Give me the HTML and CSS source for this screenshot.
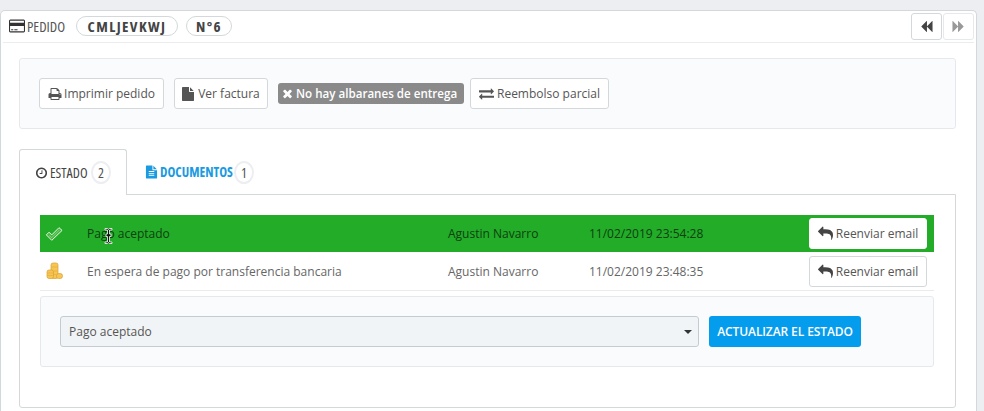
FILE: index.html
```html
<!DOCTYPE html>
<html lang="es">
<head>
<meta charset="utf-8">
<title>Pedido</title>
<link rel="stylesheet" href="styles.css">
</head>
<body>
<svg class="defs" width="0" height="0">
  <symbol id="i-card" viewBox="0 0 1920 1792"><path d="M1760 128q66 0 113 47t47 113v1216q0 66-47 113t-113 47h-1600q-66 0-113-47t-47-113v-1216q0-66 47-113t113-47h1600zm-1600 128q-13 0-22.5 9.5t-9.5 22.5v224h1664v-224q0-13-9.5-22.5t-22.5-9.5h-1600zm1600 1280q13 0 22.5-9.5t9.5-22.5v-608h-1664v608q0 13 9.5 22.5t22.5 9.5h1600zm-1504-128v-128h256v128h-256zm384 0v-128h384v128h-384z"/></symbol>
  <symbol id="i-print" viewBox="0 0 1792 1792"><path d="M448 1536h896v-256h-896v256zm0-640h896v-384h-160q-40 0-68-28t-28-68v-160h-640v640zm1152 64q0-26-19-45t-45-19-45 19-19 45 19 45 45 19 45-19 19-45zm128 0v416q0 13-9.5 22.5t-22.5 9.5h-224v160q0 40-28 68t-68 28h-960q-40 0-68-28t-28-68v-160h-224q-13 0-22.5-9.5t-9.5-22.5v-416q0-79 56.5-135.5t135.5-56.5h64v-544q0-40 28-68t68-28h672q40 0 88 20t76 48l152 152q28 28 48 76t20 88v256h64q79 0 135.5 56.5t56.5 135.5z"/></symbol>
  <symbol id="i-file" viewBox="0 0 1792 1792"><path d="M1024 512v-472q22 14 36 28l408 408q14 14 28 36h-472zm-128 32q0 40 28 68t68 28h544v1056q0 40-28 68t-68 28h-1344q-40 0-68-28t-28-68v-1600q0-40 28-68t68-28h800v544z"/></symbol>
  <symbol id="i-x" viewBox="0 0 1792 1792"><path d="M1490 1322q0 40-28 68l-136 136q-28 28-68 28t-68-28l-294-294-294 294q-28 28-68 28t-68-28l-136-136q-28-28-28-68t28-68l294-294-294-294q-28-28-28-68t28-68l136-136q28-28 68-28t68 28l294 294 294-294q28-28 68-28t68 28l136 136q28 28 28 68t-28 68l-294 294 294 294q28 28 28 68z"/></symbol>
  <symbol id="i-exchange" viewBox="0 0 1792 1792"><path d="M1792 1184v192q0 13-9.5 22.5t-22.5 9.5h-1376v192q0 13-9.5 22.5t-22.5 9.5q-12 0-24-10l-319-320q-9-9-9-22 0-14 9-23l320-320q9-9 23-9 13 0 22.5 9.5t9.5 22.5v192h1376q13 0 22.5 9.5t9.5 22.5zm0-544q0 14-9 23l-320 320q-9 9-23 9-13 0-22.5-9.5t-9.5-22.5v-192h-1376q-13 0-22.5-9.5t-9.5-22.5v-192q0-13 9.5-22.5t22.5-9.5h1376v-192q0-14 9-23t23-9q12 0 24 10l319 319q9 9 9 23z"/></symbol>
  <symbol id="i-clock" viewBox="0 0 1792 1792"><path d="M1024 544v448q0 14-9 23t-23 9h-320q-14 0-23-9t-9-23v-64q0-14 9-23t23-9h224v-352q0-14 9-23t23-9h64q14 0 23 9t9 23zm416 352q0-148-73-273t-198-198-273-73-273 73-198 198-73 273 73 273 198 198 273 73 273-73 198-198 73-273zm224 0q0 209-103 385.5t-279.5 279.5-385.5 103-385.5-103-279.5-279.5-103-385.5 103-385.5 279.5-279.5 385.5-103 385.5 103 279.5 279.5 103 385.5z"/></symbol>
  <symbol id="i-doc" viewBox="0 0 1792 1792"><path d="M1596 476q14 14 28 36h-472v-472q22 14 36 28zm-476 164h544v1056q0 40-28 68t-68 28h-1344q-40 0-68-28t-28-68v-1600q0-40 28-68t68-28h800v544q0 40 28 68t68 28zm160 736v-64q0-14-9-23t-23-9h-704q-14 0-23 9t-9 23v64q0 14 9 23t23 9h704q14 0 23-9t9-23zm0-256v-64q0-14-9-23t-23-9h-704q-14 0-23 9t-9 23v64q0 14 9 23t23 9h704q14 0 23-9t9-23zm0-256v-64q0-14-9-23t-23-9h-704q-14 0-23 9t-9 23v64q0 14 9 23t23 9h704q14 0 23-9t9-23z"/></symbol>
  <symbol id="i-reply" viewBox="0 0 1792 1792"><path d="M1792 1120q0 166-127 451-3 7-10.5 24t-13.5 30-13 22q-12 17-28 17-15 0-23.5-10t-8.5-25q0-9 2.5-26.5t2.5-23.5q5-68 5-123 0-101-17.5-181t-48.5-138.5-80-101-105.5-69.5-133-42.5-154-21.5-175.5-6h-224v256q0 26-19 45t-45 19-45-19l-512-512q-19-19-19-45t19-45l512-512q19-19 45-19t45 19 19 45v256h224q713 0 875 403 53 134 53 333z"/></symbol>
  <symbol id="i-back" viewBox="0 0 1792 1792"><path d="M1683 141q19-19 32-13t13 32v1472q0 26-13 32t-32-13l-710-710q-9-9-13-19v710q0 26-13 32t-32-13l-710-710q-19-19-19-45t19-45l710-710q19-19 32-13t13 32v710q4-10 13-19z"/></symbol>
  <symbol id="i-fwd" viewBox="0 0 1792 1792"><path d="M109 1651q-19 19-32 13t-13-32v-1472q0-26 13-32t32 13l710 710q9 9 13 19v-710q0-26 13-32t32 13l710 710q19 19 19 45t-19 45l-710 710q-19 19-32 13t-13-32v-710q-4 10-13 19z"/></symbol>
</svg>

<main class="panel">
  <header class="panel-head">
    <svg class="icon icon-card"><use href="#i-card"/></svg>
    <span class="head-title">PEDIDO</span>
    <span class="pill pill-ref">CMLJEVKWJ</span>
    <span class="pill pill-num">N°6</span>
    <nav class="pager">
      <a class="pager-btn"><svg class="icon icon-pager"><use href="#i-back"/></svg></a>
      <a class="pager-btn pager-off"><svg class="icon icon-pager"><use href="#i-fwd"/></svg></a>
    </nav>
  </header>

  <section class="well actions">
    <a class="btn btn-print"><svg class="icon"><use href="#i-print"/></svg>Imprimir pedido</a>
    <a class="btn btn-invoice"><svg class="icon"><use href="#i-file"/></svg>Ver factura</a>
    <span class="label"><svg class="icon icon-x"><use href="#i-x"/></svg>No hay albaranes de entrega</span>
    <a class="btn btn-refund"><svg class="icon icon-exchange"><use href="#i-exchange"/></svg>Reembolso parcial</a>
  </section>

  <ul class="tabs">
    <li class="tab tab-active"><svg class="icon icon-tab"><use href="#i-clock"/></svg><span class="tab-name name-estado">ESTADO</span><span class="badge">2</span></li>
    <li class="tab tab-link"><svg class="icon icon-tab"><use href="#i-doc"/></svg><span class="tab-name name-docs">DOCUMENTOS</span><span class="badge">1</span></li>
  </ul>

  <section class="tab-body">
    <div class="status-row status-current">
      <span class="col-icon">
        <svg class="status-icon" viewBox="0 0 20 18"><path d="M1.500 10l3-3 3 3L15.500 2l3.500 3L7.500 16z" fill="#46b83f" stroke="#e8f5e6" stroke-width="1.100" stroke-linejoin="round"/><path d="M4.500 10.500l3 2.500L16 4.500" fill="none" stroke="#9ed69a" stroke-width=".8"/></svg>
      </span>
      <span class="col-name">Pago aceptado</span>
      <span class="col-user">Agustin Navarro</span>
      <span class="col-date">11/02/2019 23:54:28</span>
      <a class="btn btn-resend btn-solid"><svg class="icon icon-reply"><use href="#i-reply"/></svg>Reenviar email</a>
      <svg class="text-cursor" viewBox="0 0 9 17"><path d="M1 1h2.500l1 1 1-1H8v1.500H5.500v4H7V9H5.500v5.500H8V16H5.500l-1-1-1 1H1v-1.500h2.500V9H2V6.500h1.500v-4H1z" fill="#111" stroke="#fff" stroke-width=".8"/></svg>
    </div>
    <div class="status-row status-next">
      <span class="col-icon">
        <svg class="status-icon" viewBox="0 0 18 18"><g fill="#f6c655" stroke="#dc9d2c" stroke-width=".7"><rect x="6" y="1" width="7" height="15.500" rx="2"/><rect x="2" y="8" width="6.500" height="8.500" rx="2"/><rect x="11.500" y="11.500" width="6" height="5" rx="2.200"/></g><path d="M6.500 5h6M8.500 9h4M8.500 12.500h3M2.500 11h5.500M2.500 13.500h5.500" stroke="#e3a93b" stroke-width=".6"/></svg>
      </span>
      <span class="col-name">En espera de pago por transferencia bancaria</span>
      <span class="col-user">Agustin Navarro</span>
      <span class="col-date">11/02/2019 23:48:35</span>
      <a class="btn btn-resend"><svg class="icon icon-reply"><use href="#i-reply"/></svg>Reenviar email</a>
    </div>

    <form class="well status-form">
      <div class="select">Pago aceptado<span class="caret"></span></div>
      <a class="btn-primary">ACTUALIZAR EL ESTADO</a>
    </form>
  </section>
</main>
</body>
</html>
```

FILE: styles.css
```css
* { box-sizing: border-box; }

html, body {
  margin: 0;
  height: 411px;
  overflow: hidden;
}

body {
  background: #eceef1;
  padding: 10px 7px 0 0;
  font-family: "Open Sans", sans-serif;
  font-size: 12px;
  color: #555;
}

.defs { position: absolute; }

.icon {
  width: 14px;
  height: 14px;
  fill: currentColor;
  flex: none;
}

.panel {
  background: #fff;
  border: 1px solid #d3d8db;
  border-bottom: 0;
  border-radius: 5px 5px 0 0;
  height: 401px;
  padding: 0 20px 0 18px;
  overflow: hidden;
}

/* Header */
.panel-head {
  display: flex;
  align-items: center;
  height: 32px;
  margin: 0 -18px 15px -16px;
  padding: 0 0 1px 6px;
  border-bottom: 1px solid #eaedef;
  color: #555;
}

.icon-card {
  width: 16px;
  height: 16px;
  color: #333;
}

.head-title {
  width: 40px;
  margin-left: 2px;
  font-size: 14.500px;
  font-stretch: 75%;
  color: #555;
}

.pill {
  display: flex;
  align-items: center;
  justify-content: center;
  height: 20px;
  border: 1px solid #d3d8db;
  border-radius: 10px;
  font-size: 15px;
  font-stretch: 75%;
  font-weight: 700;
  letter-spacing: 1.400px;
  color: #444;
}

.pill-ref { width: 102px; margin-left: 9px; }
.pill-num { width: 46px; margin-left: 8px; }

.pager {
  display: flex;
  gap: 1px;
  margin-left: auto;
}

.pager-btn {
  display: flex;
  align-items: center;
  justify-content: center;
  width: 31px;
  height: 27px;
  border: 1px solid #d3d8db;
  border-radius: 3px;
  color: #444;
}

.pager-off {
  color: #999;
  border-color: #e6e8ea;
}

.icon-pager { width: 13px; height: 13px; }

/* Wells and buttons */
.well {
  background: #fafbfc;
  border: 1px solid #e6e9ec;
  border-radius: 3px;
}

.actions {
  display: flex;
  align-items: center;
  height: 71px;
  padding-left: 19px;
}

.btn {
  display: flex;
  align-items: center;
  justify-content: center;
  gap: 2px;
  height: 31px;
  background: #fff;
  border: 1px solid #d3d8db;
  border-radius: 3px;
  color: #555;
  white-space: nowrap;
}

.btn-print { width: 125px; margin-right: 10px; }
.btn-invoice { width: 94px; margin-right: 10px; }
.btn-refund { width: 139px; }

.label {
  display: flex;
  align-items: center;
  gap: 2px;
  height: 21px;
  width: 186px;
  margin-right: 6px;
  padding-left: 3px;
  background: #8a8a8a;
  border-radius: 3px;
  color: #fff;
  font-size: 11.600px;
  font-weight: 600;
  white-space: nowrap;
}

.icon-x { width: 13px; height: 13px; }
.icon-exchange { width: 15px; height: 15px; margin-right: 1px; }

/* Tabs */
.tabs {
  display: flex;
  list-style: none;
  height: 46px;
  margin: 20px 0 0;
  padding: 0;
}

.tab {
  display: flex;
  align-items: center;
  height: 46px;
  padding-left: 15px;
  font-size: 14px;
  font-stretch: 75%;
}

.tab-active {
  position: relative;
  z-index: 1;
  width: 108px;
  background: #fff;
  border: 1px solid #d3d8db;
  border-bottom: 0;
  border-radius: 3px 3px 0 0;
  color: #444;
}

.tab-link {
  padding-left: 18px;
  color: #1a9ae0;
  font-size: 13.300px;
  font-weight: 700;
}

.icon-tab { width: 13px; height: 14px; }
.tab-name { margin-left: 2px; white-space: nowrap; }
.name-estado { width: 38px; }
.name-docs { width: 71px; }

.badge {
  display: flex;
  align-items: center;
  justify-content: center;
  width: 20px;
  height: 23px;
  margin-left: 3px;
  border: 2px solid #eceef1;
  border-radius: 50%;
  background: #fff;
  color: #555;
  font-weight: 400;
  font-size: 14px;
}

.tab-body {
  height: 214px;
  margin-top: -1px;
  padding: 20px 21px 0 20px;
  background: #fff;
  border: 1px solid #d3d8db;
  border-radius: 0 0 3px 3px;
}

/* Status rows */
.status-row {
  position: relative;
  display: flex;
  align-items: center;
  height: 38px;
  border-bottom: 1px solid #e9ebed;
  color: #666;
}

.status-current {
  height: 37px;
  background: #22ac28;
  border-bottom: 0;
  color: #0e3f10;
}

.status-next { height: 39px; }

.col-icon { display: flex; width: 47px; padding-left: 5px; }
.col-name { width: 361px; }
.col-user { width: 141px; }
.col-date { width: 220px; }

.status-icon { width: 18px; height: 18px; }

.btn-resend { width: 118px; gap: 3px; }
.btn-solid { border-color: #fff; }
.icon-reply { width: 15px; height: 15px; color: #444; }

.text-cursor {
  position: absolute;
  left: 64px;
  top: 12px;
  width: 9px;
  height: 18px;
}

/* Form */
.status-form {
  display: flex;
  align-items: center;
  height: 71px;
  margin-top: 5px;
  padding-left: 19px;
}

.select {
  display: flex;
  align-items: center;
  justify-content: space-between;
  width: 639px;
  height: 31px;
  padding: 0 6px 0 8px;
  background: #f1f4f6;
  border: 1px solid #c5ccd1;
  border-radius: 3px;
  color: #555;
}

.caret {
  width: 0;
  height: 0;
  border: 4px solid transparent;
  border-top-color: #333;
  border-bottom: 0;
}

.btn-primary {
  display: flex;
  align-items: center;
  justify-content: center;
  width: 152px;
  height: 31px;
  margin-left: 10px;
  background: #049ced;
  border-radius: 3px;
  color: #fff;
  font-weight: 600;
  font-size: 12px;
  letter-spacing: -.1px;
  white-space: nowrap;
}
```
